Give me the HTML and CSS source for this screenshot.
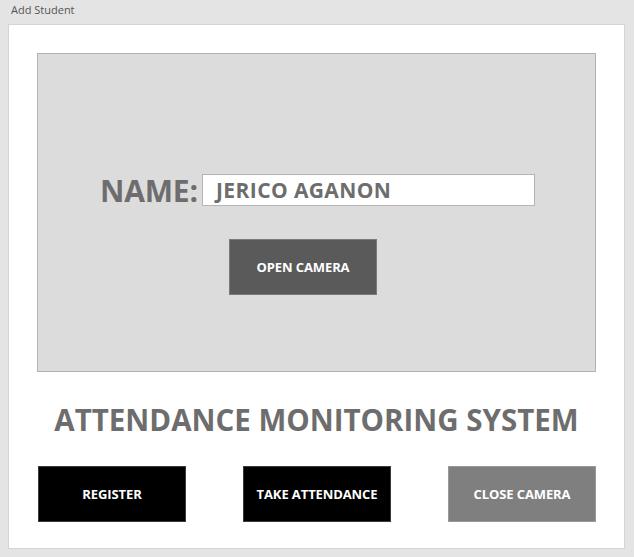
FILE: index.html
```html
<!DOCTYPE html>
<html>
<head>
<meta charset="utf-8">
<title>Add Student</title>
<link rel="stylesheet" href="styles.css">
</head>
<body>
<div class="window">
  <div class="titlebar">Add Student</div>
  <div class="panel">
    <div class="camera-box">
      <div class="name-row">
        <span class="name-label">NAME:</span>
        <div class="name-input">JERICO AGANON</div>
      </div>
      <button class="btn btn-open">OPEN CAMERA</button>
    </div>
    <h1 class="app-title">ATTENDANCE MONITORING SYSTEM</h1>
    <div class="actions">
      <button class="btn btn-black">REGISTER</button>
      <button class="btn btn-black">TAKE ATTENDANCE</button>
      <button class="btn btn-gray">CLOSE CAMERA</button>
    </div>
  </div>
</div>
</body>
</html>
```

FILE: styles.css
```css
html, body {
  margin: 0;
  padding: 0;
  background: #e4e4e4;
  font-family: "Open Sans", "Noto Sans", "Liberation Sans", sans-serif;
}
.window {
  width: 634px;
  height: 557px;
  box-sizing: border-box;
  padding: 0 9px 8px 8px;
  display: flex;
  flex-direction: column;
}
.titlebar {
  height: 24px;
  font-size: 11px;
  line-height: 20px;
  color: #555;
  padding-left: 3px;
  box-sizing: border-box;
}
.panel {
  flex: 1;
  background: #fff;
  border: 1px solid #d4d4d4;
  padding: 28px 28px 0 28px;
  box-sizing: border-box;
}
.camera-box {
  width: 559px;
  height: 319px;
  box-sizing: border-box;
  background: #dcdcdc;
  border: 1px solid #b2b2b2;
  padding: 120px 0 0 62px;
}
.name-row {
  display: flex;
  align-items: center;
  height: 32px;
}
.name-label {
  font-size: 30px;
  font-weight: 700;
  color: #6d6d6d;
  width: 102px;
  letter-spacing: -0.2px;
}
.name-input {
  width: 333px;
  height: 32px;
  box-sizing: border-box;
  background: #fff;
  border: 1px solid #b4b4b4;
  padding-left: 13px;
  font-size: 21px;
  font-weight: 700;
  color: #6d6d6d;
  line-height: 30px;
  letter-spacing: 0.4px;
}
.btn {
  width: 148px;
  height: 56px;
  border: 1px solid #7a7a7a;
  color: #fff;
  font-family: "Open Sans", "Noto Sans", sans-serif;
  font-size: 13px;
  font-weight: 700;
  letter-spacing: -0.1px;
  padding: 0;
  display: block;
}
.btn-open {
  margin: 33px 0 0 129px;
  background: #5a5a5a;
}
.app-title {
  margin: 0;
  height: 94px;
  box-sizing: border-box;
  padding-top: 28px;
  text-align: center;
  font-size: 29.5px;
  font-weight: 700;
  color: #6d6d6d;
  line-height: 40px;
}
.actions {
  display: flex;
  justify-content: space-between;
  width: 558px;
  margin-left: 1px;
}
.btn-black {
  background: #000;
  border-color: #3a3a3a;
}
.btn-gray {
  background: #7f7f7f;
  border-color: #999;
}
```
